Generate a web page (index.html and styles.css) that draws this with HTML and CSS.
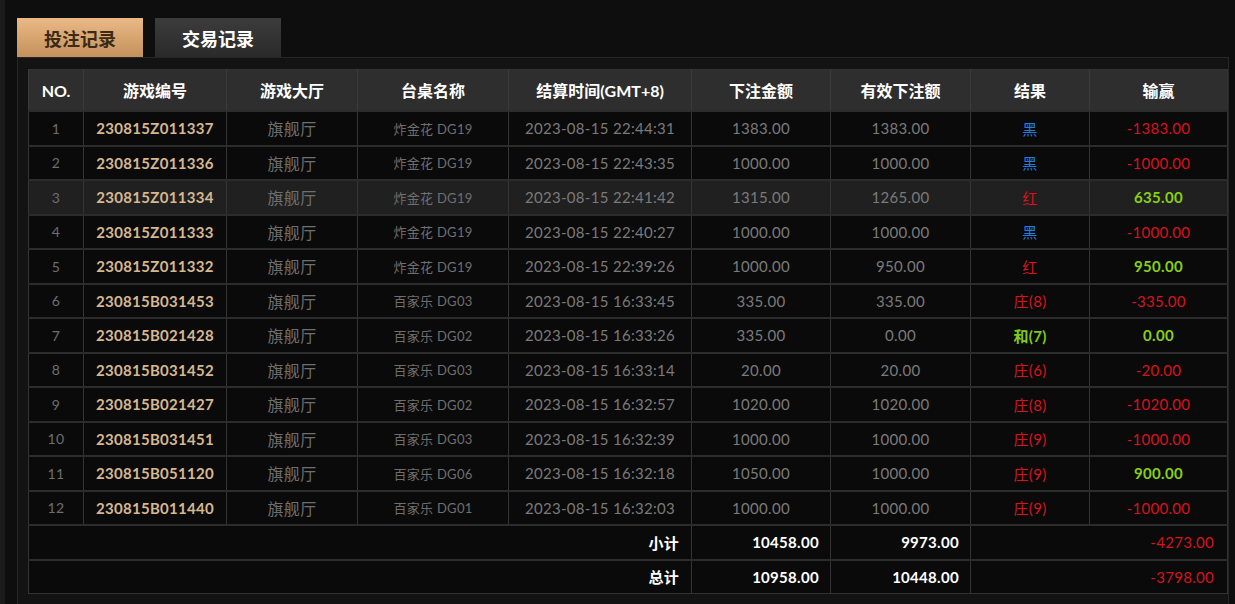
FILE: index.html
```
<!DOCTYPE html>
<html lang="zh-CN">
<head>
<meta charset="UTF-8">
<title>投注记录</title>
<link rel="stylesheet" href="styles.css">
</head>
<body>
<div class="page">
  <div class="tabs">
    <div class="tab active">投注记录</div>
    <div class="tab">交易记录</div>
  </div>
  <div class="panel">
    <table class="records">
      <colgroup>
        <col style="width:55px"><col style="width:143px"><col style="width:131px"><col style="width:151px"><col style="width:183px"><col style="width:139px"><col style="width:140px"><col style="width:119px"><col style="width:138px">
      </colgroup>
      <thead>
        <tr><th>NO.</th><th>游戏编号</th><th>游戏大厅</th><th>台桌名称</th><th>结算时间(GMT+8)</th><th>下注金额</th><th>有效下注额</th><th>结果</th><th>输赢</th></tr>
      </thead>
      <tbody>
        <tr><td class="no">1</td><td class="gid">230815Z011337</td><td class="hall">旗舰厅</td><td class="desk">炸金花 DG19</td><td class="num">2023-08-15 22:44:31</td><td class="num">1383.00</td><td class="num">1383.00</td><td class="blue">黑</td><td class="lose">-1383.00</td></tr>
        <tr><td class="no">2</td><td class="gid">230815Z011336</td><td class="hall">旗舰厅</td><td class="desk">炸金花 DG19</td><td class="num">2023-08-15 22:43:35</td><td class="num">1000.00</td><td class="num">1000.00</td><td class="blue">黑</td><td class="lose">-1000.00</td></tr>
        <tr class="hover"><td class="no">3</td><td class="gid">230815Z011334</td><td class="hall">旗舰厅</td><td class="desk">炸金花 DG19</td><td class="num">2023-08-15 22:41:42</td><td class="num">1315.00</td><td class="num">1265.00</td><td class="red">红</td><td class="win">635.00</td></tr>
        <tr><td class="no">4</td><td class="gid">230815Z011333</td><td class="hall">旗舰厅</td><td class="desk">炸金花 DG19</td><td class="num">2023-08-15 22:40:27</td><td class="num">1000.00</td><td class="num">1000.00</td><td class="blue">黑</td><td class="lose">-1000.00</td></tr>
        <tr><td class="no">5</td><td class="gid">230815Z011332</td><td class="hall">旗舰厅</td><td class="desk">炸金花 DG19</td><td class="num">2023-08-15 22:39:26</td><td class="num">1000.00</td><td class="num">950.00</td><td class="red">红</td><td class="win">950.00</td></tr>
        <tr><td class="no">6</td><td class="gid">230815B031453</td><td class="hall">旗舰厅</td><td class="desk">百家乐 DG03</td><td class="num">2023-08-15 16:33:45</td><td class="num">335.00</td><td class="num">335.00</td><td class="red">庄(8)</td><td class="lose">-335.00</td></tr>
        <tr><td class="no">7</td><td class="gid">230815B021428</td><td class="hall">旗舰厅</td><td class="desk">百家乐 DG02</td><td class="num">2023-08-15 16:33:26</td><td class="num">335.00</td><td class="num">0.00</td><td class="green">和(7)</td><td class="win">0.00</td></tr>
        <tr><td class="no">8</td><td class="gid">230815B031452</td><td class="hall">旗舰厅</td><td class="desk">百家乐 DG03</td><td class="num">2023-08-15 16:33:14</td><td class="num">20.00</td><td class="num">20.00</td><td class="red">庄(6)</td><td class="lose">-20.00</td></tr>
        <tr><td class="no">9</td><td class="gid">230815B021427</td><td class="hall">旗舰厅</td><td class="desk">百家乐 DG02</td><td class="num">2023-08-15 16:32:57</td><td class="num">1020.00</td><td class="num">1020.00</td><td class="red">庄(8)</td><td class="lose">-1020.00</td></tr>
        <tr><td class="no">10</td><td class="gid">230815B031451</td><td class="hall">旗舰厅</td><td class="desk">百家乐 DG03</td><td class="num">2023-08-15 16:32:39</td><td class="num">1000.00</td><td class="num">1000.00</td><td class="red">庄(9)</td><td class="lose">-1000.00</td></tr>
        <tr><td class="no">11</td><td class="gid">230815B051120</td><td class="hall">旗舰厅</td><td class="desk">百家乐 DG06</td><td class="num">2023-08-15 16:32:18</td><td class="num">1050.00</td><td class="num">1000.00</td><td class="red">庄(9)</td><td class="win">900.00</td></tr>
        <tr><td class="no">12</td><td class="gid">230815B011440</td><td class="hall">旗舰厅</td><td class="desk">百家乐 DG01</td><td class="num">2023-08-15 16:32:03</td><td class="num">1000.00</td><td class="num">1000.00</td><td class="red">庄(9)</td><td class="lose">-1000.00</td></tr>
      </tbody>
      <tfoot>
        <tr><td class="label" colspan="5">小计</td><td class="sum">10458.00</td><td class="sum">9973.00</td><td class="sum-lose" colspan="2">-4273.00</td></tr>
        <tr><td class="label" colspan="5">总计</td><td class="sum">10958.00</td><td class="sum">10448.00</td><td class="sum-lose" colspan="2">-3798.00</td></tr>
      </tfoot>
    </table>
  </div>
</div>
</body>
</html>
```

FILE: styles.css
```
html, body { margin: 0; height: 100%; }
body { background: #0e0e0e; border-left: 5px solid #1b1b1b; box-sizing: border-box; overflow: hidden;
  font-family: Lato, "Noto Sans CJK SC", sans-serif; color: #888; }
.page { padding: 18px 0 0 12px; }

.tabs { display: flex; gap: 12px; height: 39px; }
.tab { width: 126px; display: flex; align-items: center; justify-content: center; font-size: 18px; font-weight: bold; color: #fff;
  background: linear-gradient(#3c3c3c, #2a2a2a); }
.tab.active { color: #3b2a18; background: linear-gradient(#eab985, #c4915b); }

.panel { width: 1212px; height: 560px; box-sizing: border-box; background: #131313; border: 1px solid #262626; padding: 11px 0 0 10px; }

.records { width: 1199px; border-collapse: collapse; table-layout: fixed; background: #0a0a0a; border: 1px solid #333; }
.records th { height: 40px; padding: 0; background: #2e2e2e; color: #fff; font-size: 16px; font-weight: bold; border-left: 1px solid #3a3a3a; }
.records td { height: 32.5px; padding: 0; text-align: center; font-size: 15px; letter-spacing: 0.3px; border-top: 2px solid #2c2c2c; border-left: 1px solid #343434; }
.records tr.hover td { background: #202020; }

td.no { color: #6e6e6e; font-size: 14px; }
td.gid { color: #d6b890; font-weight: bold; }
td.hall { color: #6f6f6f; font-size: 16px; }
td.desk { color: #6f6f6f; font-size: 13px; }
td.num { color: #7a7a7a; }
td.blue { color: #1f7ee0; }
td.red { color: #d8121e; }
td.green { color: #80cc12; font-weight: bold; }
td.lose { color: #d8121e; }
td.win { color: #88d014; font-weight: bold; }

tfoot td { height: 33px; }
td.label { text-align: right; padding-right: 12px; color: #fff; font-weight: bold; }
td.sum { text-align: right; padding-right: 11px; color: #fff; font-weight: bold; }
td.sum-lose { text-align: right; padding-right: 13px; color: #d8121e; }
```
